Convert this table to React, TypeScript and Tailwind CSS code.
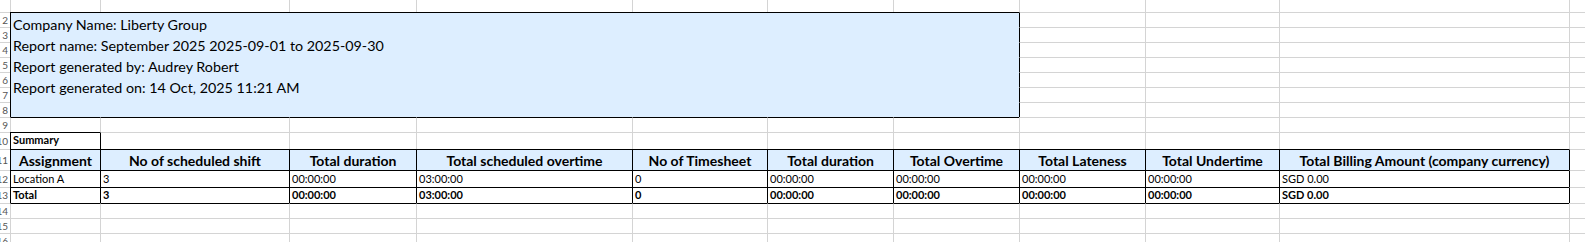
import React from "react";

// sheet geometry: col 0 is the clipped row header, 1..10 = A..J, 11 = K
const ROWS = 16;
const COLS = 12;

const header = [
	"Assignment",
	"No of scheduled shift",
	"Total duration",
	"Total scheduled overtime",
	"No of Timesheet",
	"Total duration",
	"Total Overtime",
	"Total Lateness",
	"Total Undertime",
	"Total Billing Amount (company currency)",
];

const locationRow = [
	"Location A",
	"3",
	"00:00:00",
	"03:00:00",
	"0",
	"00:00:00",
	"00:00:00",
	"00:00:00",
	"00:00:00",
	"SGD 0.00",
];

const totalRow = [
	"Total",
	"3",
	"00:00:00",
	"03:00:00",
	"0",
	"00:00:00",
	"00:00:00",
	"00:00:00",
	"00:00:00",
	"SGD 0.00",
];

function blackTop(r: number, c: number) {
	if ((r === 2 || r === 9) && c >= 1 && c <= 7) return true;
	if (r === 10 && c === 1) return true;
	if (r >= 11 && r <= 14 && c >= 1 && c <= 10) return true;
	return false;
}

function blackLeft(r: number, c: number) {
	if (r >= 2 && r <= 8 && (c === 1 || c === 8)) return true;
	if (r === 10 && (c === 1 || c === 2)) return true;
	if (r >= 11 && r <= 13 && c >= 1 && c <= 11) return true;
	return false;
}

function cellContent(r: number, c: number) {
	if (r === 10 && c === 1) {
		return <span className="px-[2px] pb-px text-[11px] font-bold">Summary</span>;
	}
	if (r === 11 && c >= 1 && c <= 10) {
		return (
			<span className="w-full text-center text-[14px] font-bold">
				{header[c - 1]}
			</span>
		);
	}
	if (r === 12 && c >= 1 && c <= 10) {
		return <span className="px-[2px] text-[11px]">{locationRow[c - 1]}</span>;
	}
	if (r === 13 && c >= 1 && c <= 10) {
		return (
			<span className="px-[2px] text-[11px] font-bold">{totalRow[c - 1]}</span>
		);
	}
	return null;
}

export default function App() {
	const cells: React.ReactNode[] = [];
	for (let r = 1; r <= ROWS; r++) {
		for (let c = 0; c < COLS; c++) {
			// covered by merged info box
			if (r >= 2 && r <= 8 && c >= 1 && c <= 7) {
				if (r === 2 && c === 1) {
					cells.push(
						<div
							key={`${r}-${c}`}
							className="col-span-7 row-span-7 border-t border-l border-black bg-[#ddeeff] pl-[2px] pt-px text-[14.3px] leading-[21px] text-black"
						>
							<p>Company Name: Liberty Group</p>
							<p>Report name: September 2025 2025-09-01 to 2025-09-30</p>
							<p>Report generated by: Audrey Robert</p>
							<p>Report generated on: 14 Oct, 2025 11:21 AM</p>
						</div>,
					);
				}
				continue;
			}
			if (c === 0) {
				cells.push(
					<div
						key={`${r}-${c}`}
						className={`flex items-center justify-end overflow-hidden pr-[2px] text-[10px] text-[#555] ${
							r === 1 ? "" : "border-t border-[#d4d4d4]"
						}`}
					>
						{r > 1 && <span className="whitespace-nowrap">{r}</span>}
					</div>,
				);
				continue;
			}
			const top = r === 1 ? "" : blackTop(r, c) ? "border-t border-t-black" : "border-t border-t-[#d4d4d4]";
			const left = blackLeft(r, c) ? "border-l border-l-black" : "border-l border-l-[#d4d4d4]";
			const fill = r === 11 && c >= 1 && c <= 10 ? "bg-[#ddeeff]" : "";
			cells.push(
				<div
					key={`${r}-${c}`}
					className={`flex items-center overflow-hidden whitespace-nowrap text-black ${top} ${left} ${fill}`}
				>
					{cellContent(r, c)}
				</div>,
			);
		}
	}

	return (
		<div className="h-[242px] w-[1585px] overflow-hidden bg-white font-['Lato',sans-serif]">
			<div className="grid grid-cols-[10px_90px_189px_127px_216px_135px_126px_126px_126px_134px_290px_1fr] grid-rows-[12px_repeat(8,15px)_17px_21px_17px_16px_15px_15px_15px]">
				{cells}
			</div>
		</div>
	);
}
